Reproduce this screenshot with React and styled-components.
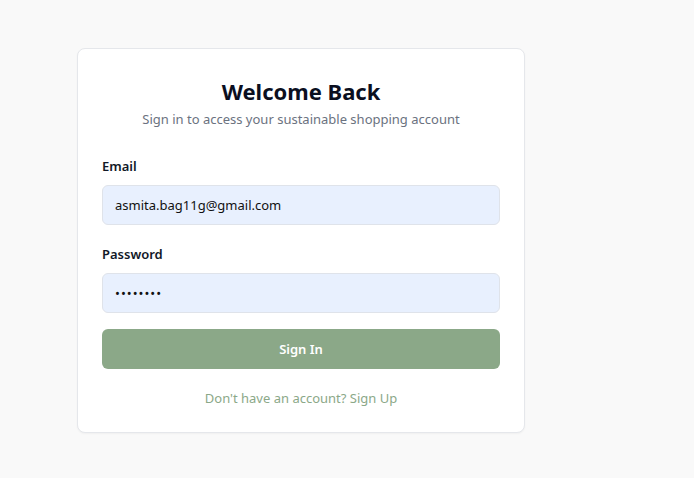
import React from "react";
import styled, { createGlobalStyle } from "styled-components";

const Global = createGlobalStyle`
  html, body { margin: 0; padding: 0; background: #f9f9f9; }
  body { font-family: "Noto Sans", "Open Sans", sans-serif; -webkit-font-smoothing: antialiased; }
  * { box-sizing: border-box; }
`;

const Page = styled.div`
  min-height: 478px;
  padding: 48px 0 0 77px;
`;

const Card = styled.div`
  width: 448px;
  background: #ffffff;
  border: 1px solid #e5e7eb;
  border-radius: 8px;
  box-shadow: 0 1px 2px rgba(0, 0, 0, 0.04);
  padding: 24px;
  display: flex;
  flex-direction: column;
`;

const Title = styled.h1`
  margin: 0;
  font-size: 22px;
  line-height: 36px;
  font-weight: 700;
  color: #0b0f1f;
  text-align: center;
`;

const Subtitle = styled.p`
  margin: 0 0 27px;
  font-size: 13px;
  line-height: 20px;
  color: #6b7280;
  text-align: center;
`;

const Field = styled.div`
  display: flex;
  flex-direction: column;
  gap: 9px;
  margin-bottom: ${(p) => p.$mb}px;
`;

const Label = styled.label`
  font-size: 13px;
  line-height: 20px;
  font-weight: 600;
  color: #111827;
`;

const Input = styled.input`
  height: 40px;
  width: 100%;
  border: 1px solid #dfe3ea;
  border-radius: 6px;
  background: #e8f0fe;
  padding: 0 12px;
  font-family: inherit;
  font-size: 13px;
  color: #111111;
  outline: none;
  letter-spacing: ${(p) => (p.type === "password" ? "1px" : "0")};
`;

const Button = styled.button`
  height: 40px;
  width: 100%;
  border: none;
  border-radius: 6px;
  background: #8ba888;
  color: #ffffff;
  font-family: inherit;
  font-size: 13px;
  font-weight: 600;
  cursor: pointer;
`;

const Footer = styled.p`
  margin: 19px 0 0;
  font-size: 13px;
  line-height: 20px;
  text-align: center;
  color: #8ba888;
`;

export default function App() {
  return (
    <>
      <Global />
      <Page>
        <Card>
          <Title>Welcome Back</Title>
          <Subtitle>Sign in to access your sustainable shopping account</Subtitle>
          <Field $mb={19}>
            <Label>Email</Label>
            <Input type="email" defaultValue="asmita.bag11g@gmail.com" />
          </Field>
          <Field $mb={16}>
            <Label>Password</Label>
            <Input type="password" defaultValue="password" />
          </Field>
          <Button>Sign In</Button>
          <Footer>Don't have an account? Sign Up</Footer>
        </Card>
      </Page>
    </>
  );
}
